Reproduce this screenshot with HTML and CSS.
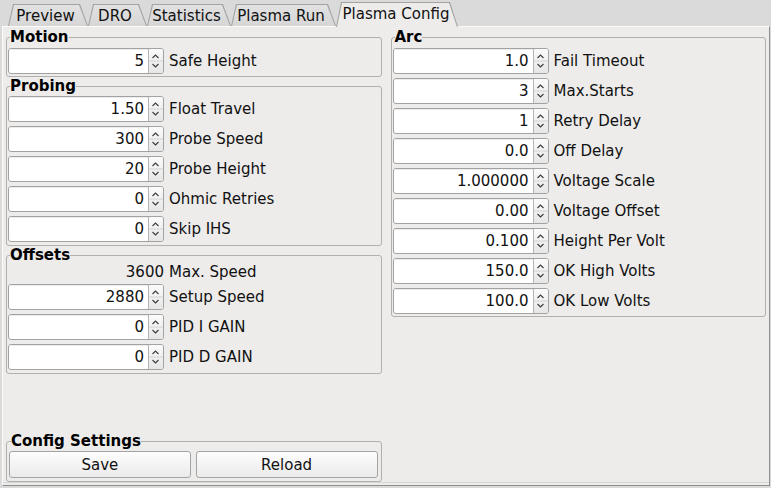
FILE: index.html
```html
<!DOCTYPE html>
<html lang="en">
<head>
<meta charset="utf-8">
<title>Plasma Config</title>
<link rel="stylesheet" href="styles.css">
</head>
<body>
<div class="window">
  <div class="tabbar">
    <div class="tab tab-preview"><span class="tab-face">Preview</span></div>
    <div class="tab tab-dro"><span class="tab-face">DRO</span></div>
    <div class="tab tab-stats"><span class="tab-face">Statistics</span></div>
    <div class="tab tab-run"><span class="tab-face">Plasma Run</span></div>
    <div class="tab tab-config active"><span class="tab-face">Plasma Config</span></div>
  </div>
  <div class="pane">
    <div class="col col-left">
      <fieldset class="group group-first">
        <legend>Motion</legend>
        <div class="rows">
          <div class="row"><div class="spin"><span class="spin-value">5</span><span class="spin-buttons"><svg class="arrows" width="14" height="24" viewBox="0 0 14 24"><line class="div" x1="0" y1="12" x2="14" y2="12"/><path d="M3.5 9 L6.5 6 L9.5 9"/><path d="M3.5 15 L6.5 18 L9.5 15"/></svg></span></div><span class="label">Safe Height</span></div>
        </div>
      </fieldset>
      <fieldset class="group">
        <legend>Probing</legend>
        <div class="rows">
          <div class="row"><div class="spin"><span class="spin-value">1.50</span><span class="spin-buttons"><svg class="arrows" width="14" height="24" viewBox="0 0 14 24"><line class="div" x1="0" y1="12" x2="14" y2="12"/><path d="M3.5 9 L6.5 6 L9.5 9"/><path d="M3.5 15 L6.5 18 L9.5 15"/></svg></span></div><span class="label">Float Travel</span></div>
          <div class="row"><div class="spin"><span class="spin-value">300</span><span class="spin-buttons"><svg class="arrows" width="14" height="24" viewBox="0 0 14 24"><line class="div" x1="0" y1="12" x2="14" y2="12"/><path d="M3.5 9 L6.5 6 L9.5 9"/><path d="M3.5 15 L6.5 18 L9.5 15"/></svg></span></div><span class="label">Probe Speed</span></div>
          <div class="row"><div class="spin"><span class="spin-value">20</span><span class="spin-buttons"><svg class="arrows" width="14" height="24" viewBox="0 0 14 24"><line class="div" x1="0" y1="12" x2="14" y2="12"/><path d="M3.5 9 L6.5 6 L9.5 9"/><path d="M3.5 15 L6.5 18 L9.5 15"/></svg></span></div><span class="label">Probe Height</span></div>
          <div class="row"><div class="spin"><span class="spin-value">0</span><span class="spin-buttons"><svg class="arrows" width="14" height="24" viewBox="0 0 14 24"><line class="div" x1="0" y1="12" x2="14" y2="12"/><path d="M3.5 9 L6.5 6 L9.5 9"/><path d="M3.5 15 L6.5 18 L9.5 15"/></svg></span></div><span class="label">Ohmic Retries</span></div>
          <div class="row"><div class="spin"><span class="spin-value">0</span><span class="spin-buttons"><svg class="arrows" width="14" height="24" viewBox="0 0 14 24"><line class="div" x1="0" y1="12" x2="14" y2="12"/><path d="M3.5 9 L6.5 6 L9.5 9"/><path d="M3.5 15 L6.5 18 L9.5 15"/></svg></span></div><span class="label">Skip IHS</span></div>
        </div>
      </fieldset>
      <fieldset class="group">
        <legend>Offsets</legend>
        <div class="rows">
          <div class="row row-static"><span class="static-value">3600</span><span class="label">Max. Speed</span></div>
          <div class="row"><div class="spin"><span class="spin-value">2880</span><span class="spin-buttons"><svg class="arrows" width="14" height="24" viewBox="0 0 14 24"><line class="div" x1="0" y1="12" x2="14" y2="12"/><path d="M3.5 9 L6.5 6 L9.5 9"/><path d="M3.5 15 L6.5 18 L9.5 15"/></svg></span></div><span class="label">Setup Speed</span></div>
          <div class="row"><div class="spin"><span class="spin-value">0</span><span class="spin-buttons"><svg class="arrows" width="14" height="24" viewBox="0 0 14 24"><line class="div" x1="0" y1="12" x2="14" y2="12"/><path d="M3.5 9 L6.5 6 L9.5 9"/><path d="M3.5 15 L6.5 18 L9.5 15"/></svg></span></div><span class="label">PID I GAIN</span></div>
          <div class="row"><div class="spin"><span class="spin-value">0</span><span class="spin-buttons"><svg class="arrows" width="14" height="24" viewBox="0 0 14 24"><line class="div" x1="0" y1="12" x2="14" y2="12"/><path d="M3.5 9 L6.5 6 L9.5 9"/><path d="M3.5 15 L6.5 18 L9.5 15"/></svg></span></div><span class="label">PID D GAIN</span></div>
        </div>
      </fieldset>
      <fieldset class="group group-config">
        <legend>Config Settings</legend>
        <div class="buttons">
          <button class="btn" type="button">Save</button>
          <button class="btn" type="button">Reload</button>
        </div>
      </fieldset>
    </div>
    <div class="col col-right">
      <fieldset class="group group-first">
        <legend>Arc</legend>
        <div class="rows">
          <div class="row"><div class="spin"><span class="spin-value">1.0</span><span class="spin-buttons"><svg class="arrows" width="14" height="24" viewBox="0 0 14 24"><line class="div" x1="0" y1="12" x2="14" y2="12"/><path d="M3.5 9 L6.5 6 L9.5 9"/><path d="M3.5 15 L6.5 18 L9.5 15"/></svg></span></div><span class="label">Fail Timeout</span></div>
          <div class="row"><div class="spin"><span class="spin-value">3</span><span class="spin-buttons"><svg class="arrows" width="14" height="24" viewBox="0 0 14 24"><line class="div" x1="0" y1="12" x2="14" y2="12"/><path d="M3.5 9 L6.5 6 L9.5 9"/><path d="M3.5 15 L6.5 18 L9.5 15"/></svg></span></div><span class="label">Max.Starts</span></div>
          <div class="row"><div class="spin"><span class="spin-value">1</span><span class="spin-buttons"><svg class="arrows" width="14" height="24" viewBox="0 0 14 24"><line class="div" x1="0" y1="12" x2="14" y2="12"/><path d="M3.5 9 L6.5 6 L9.5 9"/><path d="M3.5 15 L6.5 18 L9.5 15"/></svg></span></div><span class="label">Retry Delay</span></div>
          <div class="row"><div class="spin"><span class="spin-value">0.0</span><span class="spin-buttons"><svg class="arrows" width="14" height="24" viewBox="0 0 14 24"><line class="div" x1="0" y1="12" x2="14" y2="12"/><path d="M3.5 9 L6.5 6 L9.5 9"/><path d="M3.5 15 L6.5 18 L9.5 15"/></svg></span></div><span class="label">Off Delay</span></div>
          <div class="row"><div class="spin"><span class="spin-value">1.000000</span><span class="spin-buttons"><svg class="arrows" width="14" height="24" viewBox="0 0 14 24"><line class="div" x1="0" y1="12" x2="14" y2="12"/><path d="M3.5 9 L6.5 6 L9.5 9"/><path d="M3.5 15 L6.5 18 L9.5 15"/></svg></span></div><span class="label">Voltage Scale</span></div>
          <div class="row"><div class="spin"><span class="spin-value">0.00</span><span class="spin-buttons"><svg class="arrows" width="14" height="24" viewBox="0 0 14 24"><line class="div" x1="0" y1="12" x2="14" y2="12"/><path d="M3.5 9 L6.5 6 L9.5 9"/><path d="M3.5 15 L6.5 18 L9.5 15"/></svg></span></div><span class="label">Voltage Offset</span></div>
          <div class="row"><div class="spin"><span class="spin-value">0.100</span><span class="spin-buttons"><svg class="arrows" width="14" height="24" viewBox="0 0 14 24"><line class="div" x1="0" y1="12" x2="14" y2="12"/><path d="M3.5 9 L6.5 6 L9.5 9"/><path d="M3.5 15 L6.5 18 L9.5 15"/></svg></span></div><span class="label">Height Per Volt</span></div>
          <div class="row"><div class="spin"><span class="spin-value">150.0</span><span class="spin-buttons"><svg class="arrows" width="14" height="24" viewBox="0 0 14 24"><line class="div" x1="0" y1="12" x2="14" y2="12"/><path d="M3.5 9 L6.5 6 L9.5 9"/><path d="M3.5 15 L6.5 18 L9.5 15"/></svg></span></div><span class="label">OK High Volts</span></div>
          <div class="row"><div class="spin"><span class="spin-value">100.0</span><span class="spin-buttons"><svg class="arrows" width="14" height="24" viewBox="0 0 14 24"><line class="div" x1="0" y1="12" x2="14" y2="12"/><path d="M3.5 9 L6.5 6 L9.5 9"/><path d="M3.5 15 L6.5 18 L9.5 15"/></svg></span></div><span class="label">OK Low Volts</span></div>
        </div>
      </fieldset>
    </div>
  </div>
</div>
</body>
</html>
```

FILE: styles.css
```css
html, body {
  margin: 0;
  padding: 0;
}

body {
  width: 771px;
  height: 488px;
  overflow: hidden;
  background: #dadada;
  font-family: "DejaVu Sans", "Liberation Sans", sans-serif;
  font-size: 15px;
  color: #111;
}

.window {
  display: flex;
  flex-direction: column;
}

/* ---------- tabs ---------- */
.tabbar {
  height: 26px;
  display: flex;
  align-items: flex-end;
  padding-left: 8px;
}

.tab {
  height: 22px;
  display: flex;
  background: #a3a3a3;
  clip-path: polygon(0 100%, 5px 0, calc(100% - 8px) 0, 100% 100%);
}

.tab-face {
  flex: 1;
  margin: 1px 1px 0 1px;
  display: flex;
  align-items: center;
  justify-content: center;
  padding-right: 5px;
  background: linear-gradient(#e2e2e2, #d6d6d6);
  clip-path: polygon(0 100%, 5px 0, calc(100% - 8px) 0, 100% 100%);
  white-space: nowrap;
}

.tab-preview { width: 80px; }
.tab-dro { width: 59px; }
.tab-stats { width: 84px; }
.tab-run { width: 105px; }
.tab-config { width: 122px; }

.tab.active {
  height: 25px;
  margin-bottom: -1px;
  position: relative;
  z-index: 1;
}

.tab.active .tab-face {
  background: #edeceb;
  padding-bottom: 2px;
  padding-right: 2px;
}

/* ---------- pane ---------- */
.pane {
  margin-left: 2px;
  width: 768px;
  height: 460px;
  box-sizing: border-box;
  border-top: 1px solid #fbfbfb;
  border-left: 1px solid #fbfbfb;
  border-right: 1px solid #8e8e8e;
  border-bottom: 1px solid #8e8e8e;
  background: #edeceb;
  box-shadow: inset 0 -2px 0 #edeceb, inset 0 -3px 0 #d6d6d5;
  padding: 2px 3px 3px 3px;
  display: grid;
  grid-template-columns: 1fr 1fr;
  column-gap: 9px;
}

.col {
  display: flex;
  flex-direction: column;
  min-width: 0;
}

/* ---------- group boxes ---------- */
.group {
  margin: 0;
  border: 1px solid #b1b0ae;
  border-radius: 3px;
  padding: 1px 3px 3px 1px;
  min-width: 0;
}

.group-first {
  padding-top: 2px;
  padding-bottom: 2px;
}

.group + .group {
  margin-top: 1px;
}

.group legend {
  padding: 0;
  margin-left: 2px;
  font-weight: bold;
  font-size: 15px;
  line-height: 17px;
  color: #000;
}

.group-config {
  margin-top: auto !important;
  padding: 1px 3px 3px 2px;
}

.rows {
  display: flex;
  flex-direction: column;
  gap: 4px;
}

.row {
  display: flex;
  align-items: center;
  gap: 5px;
  height: 26px;
}

.row-static {
  height: 15px;
  margin-top: -1px;
  margin-bottom: 1px;
}

.static-value {
  width: 156px;
  text-align: right;
}

.label {
  white-space: nowrap;
}

/* ---------- spin box ---------- */
.spin {
  width: 156px;
  height: 26px;
  box-sizing: border-box;
  border: 1px solid #a2a2a2;
  border-radius: 3px;
  background: #fff;
  display: flex;
  overflow: hidden;
  flex: none;
}

.spin-value {
  flex: 1;
  text-align: right;
  padding-right: 4px;
  line-height: 24px;
  box-shadow: inset 0 1px 0 #ececec;
}

.spin-buttons {
  width: 14px;
  border-left: 1px solid #b4b4b4;
  background: linear-gradient(#fbfbfb, #e6e6e6);
  display: flex;
}

.arrows {
  display: block;
}

.arrows path {
  fill: none;
  stroke: #3a3a3a;
  stroke-width: 1.1;
}

.arrows .div {
  stroke: #d2d2d2;
  stroke-width: 1;
}

/* ---------- buttons ---------- */
.buttons {
  display: grid;
  grid-template-columns: 1fr 1fr;
  gap: 5px;
}

.btn {
  height: 27px;
  margin: 0;
  padding: 0;
  border: 1px solid #a4a4a4;
  border-radius: 3px;
  background: linear-gradient(#fdfdfd, #ebebeb);
  font-family: "DejaVu Sans", "Liberation Sans", sans-serif;
  font-size: 15px;
  color: #111;
}
```
